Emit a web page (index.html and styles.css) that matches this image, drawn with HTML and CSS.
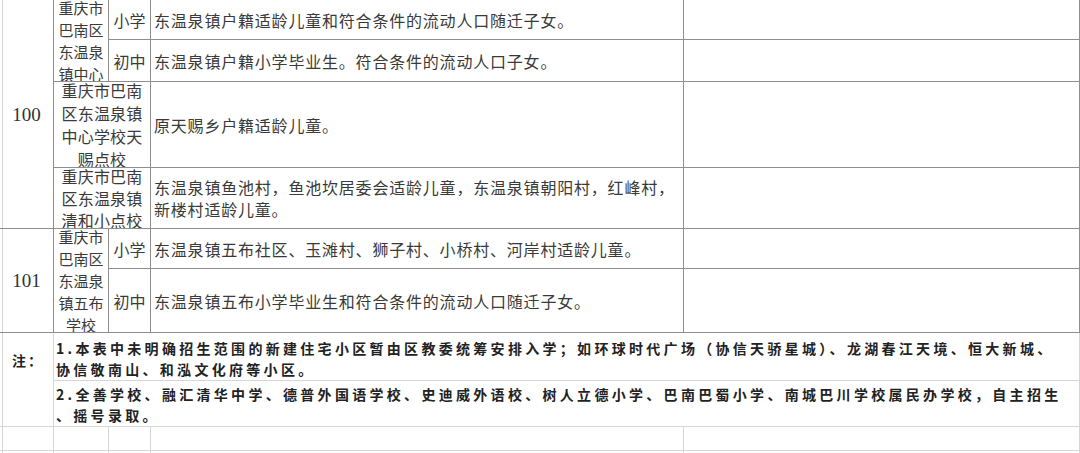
FILE: index.html
```html
<!DOCTYPE html>
<html lang="zh-CN">
<head>
<meta charset="utf-8">
<title>招生范围</title>
<link rel="stylesheet" href="styles.css">
</head>
<body>
<div class="sheet">
  <div class="c num span-r4">100</div>
  <div class="c school narrow span-r2">重庆市<br>巴南区<br>东温泉<br>镇中心</div>
  <div class="c lvl">小学</div>
  <div class="c desc">东温泉镇户籍适龄儿童和符合条件的流动人口随迁子女。</div>
  <div class="c"></div>

  <div class="c lvl">初中</div>
  <div class="c desc">东温泉镇户籍小学毕业生。符合条件的流动人口子女。</div>
  <div class="c"></div>

  <div class="c school wide span-c2 lh23">重庆市巴南<br>区东温泉镇<br>中心学校天<br>赐点校</div>
  <div class="c desc">原天赐乡户籍适龄儿童。</div>
  <div class="c"></div>

  <div class="c school wide span-c2">重庆市巴南<br>区东温泉镇<br>清和小点校</div>
  <div class="c desc">东温泉镇鱼池村，鱼池坎居委会适龄儿童，东温泉镇朝阳村，红峰村，<br>新楼村适龄儿童。</div>
  <div class="c"></div>

  <div class="c num span-r2">101</div>
  <div class="c school narrow span-r2">重庆市<br>巴南区<br>东温泉<br>镇五布<br>学校</div>
  <div class="c lvl">小学</div>
  <div class="c desc">东温泉镇五布社区、玉滩村、狮子村、小桥村、河岸村适龄儿童。</div>
  <div class="c"></div>

  <div class="c lvl">初中</div>
  <div class="c desc">东温泉镇五布小学毕业生和符合条件的流动人口随迁子女。</div>
  <div class="c"></div>

  <div class="g note-label">注：</div>
  <div class="g note span-c4">1.本表中未明确招生范围的新建住宅小区暂由区教委统筹安排入学；如环球时代广场（协信天骄星城）、龙湖春江天境、恒大新城、<br>协信敬南山、和泓文化府等小区。</div>

  <div class="g"></div>
  <div class="g note span-c4">2.全善学校、融汇清华中学、德普外国语学校、史迪威外语校、树人立德小学、巴南巴蜀小学、南城巴川学校属民办学校，自主招生<br>、摇号录取。</div>

  <div class="g"></div><div class="g"></div><div class="g"></div><div class="g"></div><div class="g"></div>
  <div class="g"></div><div class="g"></div><div class="g"></div><div class="g"></div><div class="g"></div>
</div>
</body>
</html>
```

FILE: styles.css
```css
html, body {
  margin: 0;
  padding: 0;
  background: #fff;
}

.sheet {
  width: 1080px;
  height: 453px;
  overflow: hidden;
  display: grid;
  grid-template-columns: 54px 55px 42px 533px 396px;
  grid-template-rows: 40px 42px 86px 61px 40px 64px 48px 46px 24px 30px;
  background: linear-gradient(#d6d6d6, #d6d6d6) 2px 0 / 1px 100% no-repeat, #fff;
  font-family: "Noto Sans CJK SC", sans-serif;
  color: #3a3a3a;
}

.c, .g {
  box-sizing: border-box;
  display: flex;
  align-items: center;
  overflow: hidden;
  min-width: 0;
  min-height: 0;
}

.c {
  border-right: 1px solid #8e8e8e;
  border-bottom: 1px solid #8e8e8e;
}

.g {
  border-right: 1px solid #d6d6d6;
  border-bottom: 1px solid #d6d6d6;
}

.span-r4 { grid-row: span 4; }
.span-r2 { grid-row: span 2; }
.span-c2 { grid-column: span 2; }
.span-c4 { grid-column: span 4; }

.num {
  justify-content: center;
  font-family: "Liberation Serif", serif;
  font-size: 19px;
  color: #333;
  padding-top: 1px;
}

.school {
  justify-content: center;
  text-align: center;
  line-height: 22px;
}

.school.narrow {
  font-size: 15px;
  letter-spacing: 0;
}

.school.wide {
  font-size: 16px;
  letter-spacing: 0.2px;
}

.school.lh23 {
  line-height: 23px;
}

.lvl {
  justify-content: center;
  font-size: 16px;
}

.desc {
  font-size: 16px;
  letter-spacing: 0.8px;
  line-height: 22px;
  padding-left: 3px;
  white-space: nowrap;
}

.note-label {
  border-bottom: none;
  font-size: 14px;
  font-weight: 700;
  color: #222;
  padding-left: 12px;
  padding-top: 5px;
  letter-spacing: 2px;
}

.note {
  align-items: flex-end;
  font-size: 14px;
  font-weight: 700;
  color: #222;
  letter-spacing: 3.3px;
  line-height: 21px;
  padding-left: 2px;
  padding-bottom: 0;
  white-space: nowrap;
}
```
